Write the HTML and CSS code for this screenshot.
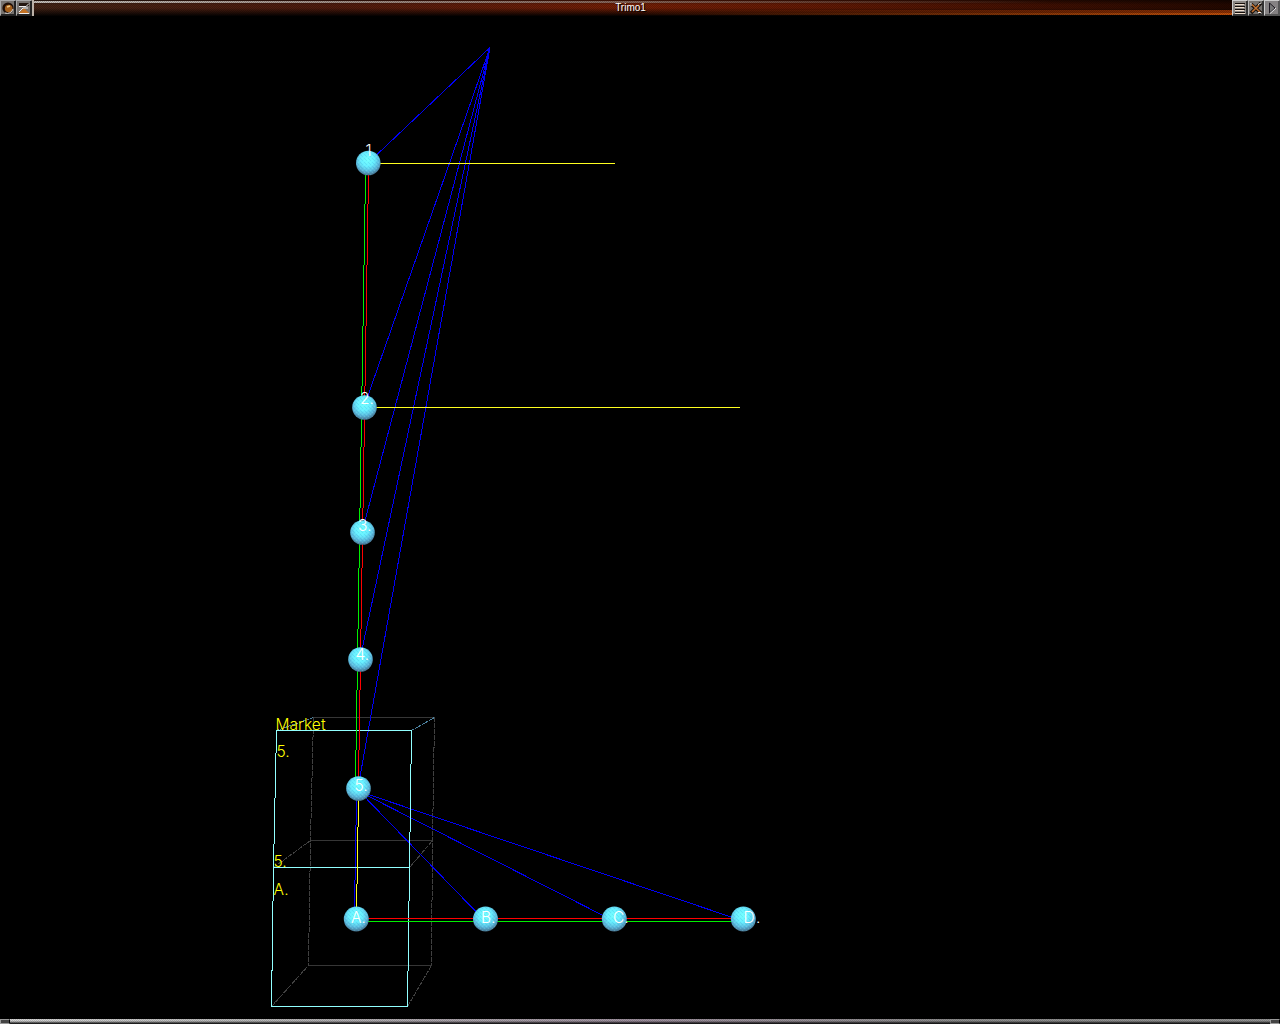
FILE: index.html
```html
<!DOCTYPE html>
<html lang="en">
<head>
<meta charset="utf-8">
<title>Trimo1</title>
<link rel="stylesheet" href="styles.css">
</head>
<body>
<header class="titlebar">
  <svg class="btn" viewBox="0 0 16 16"><rect width="16" height="16" fill="#77736f"/><path d="M0 15V0H15" fill="none" stroke="#aaa" stroke-width="2"/><path d="M15 1V15H1" fill="none" stroke="#222" stroke-width="2"/><circle cx="8" cy="8" r="5.600" fill="#201008"/><circle cx="8.700" cy="8.500" r="3.800" fill="#a5601c"/><path d="M7 7l3-1" stroke="#efca87" stroke-width="1.500"/><path d="M5 13a6 6 0 0 0 8-4" fill="none" stroke="#ddd"/></svg>
  <svg class="btn" viewBox="0 0 16 16"><rect width="16" height="16" fill="#77736f"/><path d="M0 15V0H15" fill="none" stroke="#aaa" stroke-width="2"/><path d="M15 1V15H1" fill="none" stroke="#222" stroke-width="2"/><path d="M3 3h10v3H3z" fill="#241811"/><path d="M3 6.500h7l3-3" fill="none" stroke="#eee"/><path d="M3 13l5-5 5 5z" fill="#c47224"/><path d="M3 12l4-4h5M3 13.500h10" fill="none" stroke="#eee"/></svg>
  <h1 class="caption">Trimo1</h1>
  <svg class="btn" viewBox="0 0 16 16"><rect width="16" height="16" fill="#8a8683"/><path d="M0 15V0H15" fill="none" stroke="#ccc" stroke-width="2"/><path d="M15 1V15H1" fill="none" stroke="#333" stroke-width="2"/><path d="M3 3.500h10M3 6.500h10M3 9.500h10M3 12.500h10" stroke="#17100c"/><path d="M3 4.500h9M3 7.500h9M3 10.500h9M3 13.500h10" stroke="#f0dfce"/></svg>
  <svg class="btn" viewBox="0 0 16 16"><rect width="16" height="16" fill="#77736f"/><path d="M0 15V0H15" fill="none" stroke="#bbb" stroke-width="2"/><path d="M15 1V15H1" fill="none" stroke="#333" stroke-width="2"/><path d="M3 4l10 9M13 3L3 13" stroke="#17100c" stroke-width="3.500"/><path d="M4 4.500l8 7.500M11 5l-7 7" stroke="#c0702f" stroke-width="1.600"/><path d="M10 4.500l3-1.500M3 6V3M10 12.500h3" fill="none" stroke="#eee"/></svg>
  <svg class="btn" viewBox="0 0 16 16"><rect width="16" height="16" fill="#858283"/><path d="M0 15V0H15" fill="none" stroke="#ccc" stroke-width="2"/><path d="M15 1V15H1" fill="none" stroke="#555" stroke-width="2"/><path d="M5.500 3v10l5.500-5z" fill="#777" stroke="#1c1820"/><path d="M6 13.500l6-5.500" stroke="#eee"/></svg>
</header>
<main class="view">
  <svg class="scene" viewBox="0 16 1280 1003" width="1280" height="1003">
    <defs>
      <radialGradient id="ball" cx=".47" cy=".36" r=".68">
        <stop offset="0" stop-color="#72ffff"/><stop offset=".4" stop-color="#66eeff"/><stop offset=".7" stop-color="#5bb8dc"/><stop offset="1" stop-color="#41607a"/>
      </radialGradient>
      <pattern id="grain" width="4" height="4" patternUnits="userSpaceOnUse">
        <path d="M0 0h1v1H0zM2 2h1v1H2z" fill="#9ff" opacity=".2"/><path d="M2 0h1v1H2zM0 2h1v1H0zM1 3h1v1H1z" fill="#26a" opacity=".12"/>
      </pattern>
    </defs>
    <g class="lines back">
      <path d="M313.500 717.500H434.500M310.500 840.500H432.500M308.500 965.500H431.500"/>
      <path class="dotted" d="M313.500 717.500L310.500 840.500L308.500 965.500M434.500 717.500L432.500 840.500L431.500 965.500M273.500 867.500L310.500 840.500M409.500 867.500L432.500 840.500M271.500 1006.500L308.500 965.500M407.500 1006.500L431.500 965.500"/>
      <path class="edge" d="M276.500 730.500L313.500 717.500M411.500 730.500L434.500 717.500"/>
    </g>
    <g class="lines blue">
      <path d="M490 47.500L368 163M490 47.500L364 407M490 47.500L362 532M490 47.500L360 659M490 47.500L358 788"/>
      <path d="M358 790L485 921M358 791L614 921M358 791L743 921M356.700 788L354.300 919"/>
    </g>
    <path class="lines front" d="M276.500 730.500H411.500L409.500 867.500H273.500ZM273.500 867.500L271.500 1006.500H407.500L409.500 867.500"/>
    <path class="lines green" d="M365.700 163L355.400 788M356 921.500H743"/>
    <path class="lines red" d="M368.700 163L358.400 788M356 918.500H743"/>
    <path class="lines yellow" d="M368 163.500H615M364 407.500H740M358.700 788L356.400 919"/>
    <g class="balls">
      <circle cx="368.300" cy="163" r="12.300"/><circle cx="364.500" cy="407.500" r="12.300"/><circle cx="362.500" cy="532.500" r="12.300"/><circle cx="360.500" cy="659.500" r="12.300"/><circle cx="358.500" cy="788.500" r="12.300"/><circle cx="356.300" cy="919" r="12.500"/><circle cx="485.500" cy="919" r="12.500"/><circle cx="614.300" cy="919" r="12.500"/><circle cx="743.300" cy="919" r="12.500"/>
    </g>
    <g class="grain">
      <circle cx="368.300" cy="163" r="12"/><circle cx="364.500" cy="407.500" r="12"/><circle cx="362.500" cy="532.500" r="12"/><circle cx="360.500" cy="659.500" r="12"/><circle cx="358.500" cy="788.500" r="12"/><circle cx="356.300" cy="919" r="12"/><circle cx="485.500" cy="919" r="12"/><circle cx="614.300" cy="919" r="12"/><circle cx="743.300" cy="919" r="12"/>
    </g>
    <g class="label white">
      <text x="365.500" y="155.500">1</text><text x="360" y="404">2.</text><text x="358" y="531">3.</text><text x="355.500" y="660">4.</text><text x="354.500" y="791">5.</text>
      <text x="351" y="923">A.</text><text x="481" y="923">B.</text><text x="613" y="923">C.</text><text x="743.500" y="923">D</text><text x="756" y="923">.</text>
    </g>
    <g class="label yellowtext">
      <text x="275.500" y="730" textLength="50">Market</text><text x="276.500" y="757">5.</text><text x="273.500" y="867">5.</text><text x="273.500" y="895" textLength="15">A.</text>
    </g>
  </svg>
</main>
<footer class="frame"><i class="grip"></i><i class="rail"></i><i class="grip"></i></footer>
</body>
</html>
```
FILE: styles.css
```css
body {
  margin: 0;
  width: 1280px;
  height: 1024px;
  display: flex;
  flex-direction: column;
  background: #000;
  overflow: hidden;
}
.titlebar {
  display: flex;
  height: 16px;
  flex: none;
}
.btn {
  width: 16px;
  height: 16px;
  flex: none;
}
.caption {
  flex: 1;
  margin: 0;
  padding-right: 5px;
  border-left: 2px solid #bbb1a8;
  box-sizing: border-box;
  text-align: center;
  font: 10px/15px "Liberation Sans", Arial, sans-serif;
  color: #fff;
  text-shadow: 1px 1px #000;
  background:
    repeating-conic-gradient(rgba(0,0,0,.22) 0 25%, transparent 0 50%) 0 0 / 2px 2px,
    linear-gradient(90deg, rgba(215,210,205,.9), rgba(150,125,115,.75) 50%, transparent 85%) 0 1px / 100% 2px no-repeat,
    linear-gradient(180deg, rgba(0,0,0,.5), transparent 30%),
    linear-gradient(90deg, transparent 50%, #c4500a 100%) 0 13px / 100% 2px no-repeat,
    linear-gradient(90deg, transparent 50%, #8c3004 100%) 0 10px / 100% 3px no-repeat,
    linear-gradient(180deg, transparent 50%, rgba(0,0,0,.95)),
    linear-gradient(90deg, #442416, #521c0e 25%, #782006 50%, #661a04 65%, #240800);
}
.view {
  flex: 1;
  min-height: 0;
}
.scene {
  display: block;
}
.lines {
  fill: none;
  stroke-width: 1;
  shape-rendering: crispEdges;
}
.back { stroke: #363636; }
.dotted { stroke: #404040; stroke-dasharray: 5 1; }
.edge { stroke: #4c82a0; stroke-dasharray: 3 1; }
.blue { stroke: #0000f4; }
.front { stroke: #91ffff; }
.green { stroke: #00f000; }
.red { stroke: #f00; }
.yellow { stroke: #ffff20; }
.balls { fill: url(#ball); }
.grain { fill: url(#grain); }
.label {
  font: 300 15.500px Inter, "Liberation Sans", sans-serif;
}
.white { fill: #fff; }
.yellowtext { fill: #ff0; }
.frame {
  display: flex;
  height: 5px;
  flex: none;
}
.grip {
  width: 10px;
  box-sizing: border-box;
  border: 1px solid #999;
  border-right-color: #000;
  background: #444;
}
.rail {
  flex: 1;
  background:
    repeating-conic-gradient(rgba(0,0,0,.15) 0 25%, transparent 0 50%) 0 0 / 2px 2px,
    linear-gradient(180deg, rgba(255,255,255,.15) 40%, rgba(0,0,0,.35) 60%, #111 95%),
    linear-gradient(90deg, #ccc, #aaa 20%, #8d7d8d 50%, #777 75%, #808080);
}
```
